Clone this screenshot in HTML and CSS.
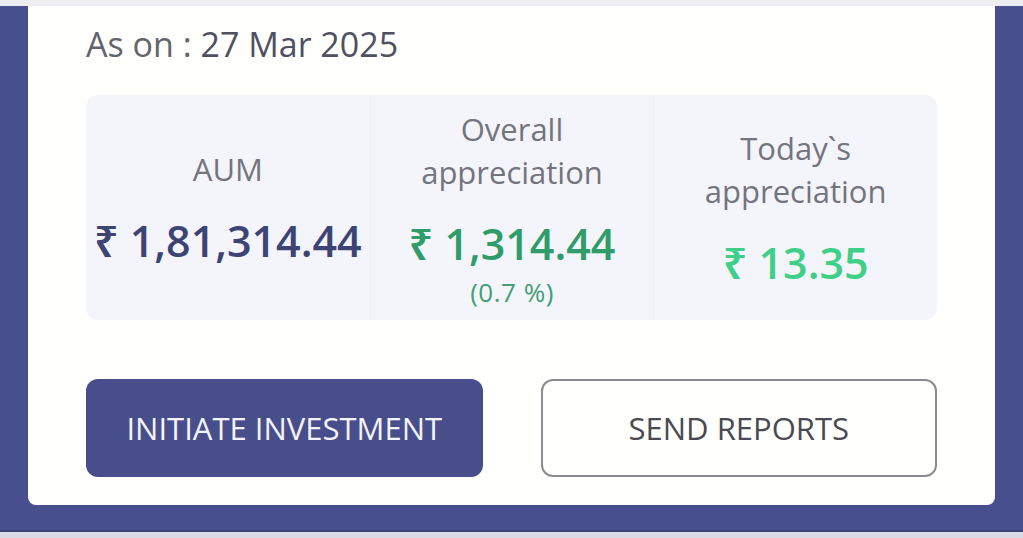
FILE: index.html
```html
<!DOCTYPE html>
<html lang="en">
<head>
<meta charset="utf-8">
<title>Portfolio summary</title>
<link rel="stylesheet" href="styles.css">
</head>
<body>
<div class="top-strip"></div>
<div class="page">
  <section class="card">
    <p class="as-on"><span class="as-on-label">As on :</span> <span class="as-on-date">27 Mar 2025</span></p>
    <div class="stats">
      <div class="stat">
        <div class="stat-label">AUM</div>
        <div class="stat-value value-navy">₹ 1,81,314.44</div>
      </div>
      <div class="stat">
        <div class="stat-label">Overall<br>appreciation</div>
        <div class="stat-value value-green">₹ 1,314.44</div>
        <div class="stat-pct">(0.7 %)</div>
      </div>
      <div class="stat">
        <div class="stat-label">Today`s<br>appreciation</div>
        <div class="stat-value value-light-green">₹ 13.35</div>
      </div>
    </div>
    <div class="actions">
      <button class="btn btn-primary" type="button">INITIATE INVESTMENT</button>
      <button class="btn btn-outline" type="button">SEND REPORTS</button>
    </div>
  </section>
</div>
<div class="bottom-band"></div>
</body>
</html>
```

FILE: styles.css
```css
html, body {
  margin: 0;
  padding: 0;
}

body {
  background: #474f8e;
  font-family: "Open Sans", "Noto Sans", "DejaVu Sans", sans-serif;
  width: 1023px;
  height: 538px;
  overflow: hidden;
}

.top-strip {
  height: 6px;
  background: #eeeef2;
}

.page {
  padding: 0 28px;
}

.card {
  background: #fffffd;
  border-radius: 0 0 8px 8px;
  padding: 15px 58px 28px;
}

.as-on {
  margin: 0;
  font-size: 34px;
  line-height: 46px;
  color: #64646c;
}

.as-on-date {
  color: #4f5062;
}

.stats {
  margin-top: 28px;
  height: 225px;
  display: grid;
  grid-template-columns: 1fr 1fr 1fr;
  background: #f4f5fa;
  border-radius: 12px;
  overflow: hidden;
}

.stat {
  display: flex;
  flex-direction: column;
  align-items: center;
  justify-content: center;
  text-align: center;
}

.stat + .stat {
  border-left: 1px solid #eceef4;
}

.stat-label {
  font-size: 31px;
  line-height: 43px;
  color: #74747d;
}

.stat-value {
  margin-top: 24px;
  font-size: 43px;
  line-height: 52px;
  font-weight: 600;
  white-space: nowrap;
}

.value-navy {
  color: #3d4373;
}

.value-green {
  color: #2f9c69;
}

.value-light-green {
  color: #3fcf88;
}

.stat-pct {
  margin-top: 7px;
  font-size: 26px;
  line-height: 30px;
  color: #449d74;
  letter-spacing: 0.5px;
}

.actions {
  margin-top: 59px;
  display: grid;
  grid-template-columns: 1fr 1fr;
  gap: 58px;
}

.btn {
  height: 98px;
  border-radius: 12px;
  font-family: "Open Sans", "Noto Sans", sans-serif;
  font-size: 31px;
  padding: 0;
  cursor: pointer;
}

.btn-primary {
  background: #474e8b;
  color: #f3f3fc;
  border: none;
}

.btn-outline {
  background: #fffffd;
  color: #4a4a52;
  border: 2px solid #8c8c90;
}

.bottom-band {
  margin-top: 25px;
  height: 10px;
  border-top: 2px solid #3c4177;
  background: #d9dae3;
}
```
